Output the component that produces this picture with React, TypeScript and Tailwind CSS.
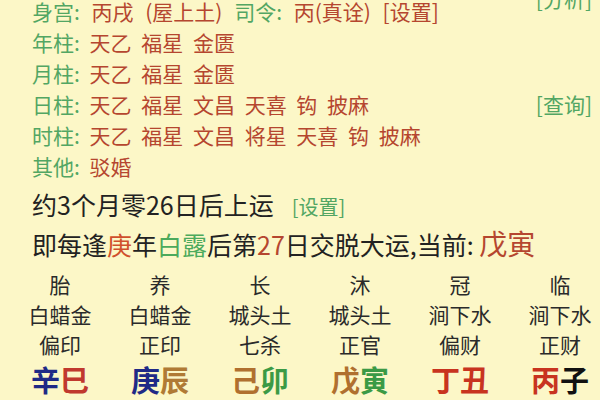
import React from "react";

const LABEL = "text-[#52a663]";
const VALUE = "text-[#b5462f]";

interface PillarRow {
  label: string;
  value: string;
  action?: string;
}

const rows: PillarRow[] = [
  { label: "年柱", value: "天乙 福星 金匮" },
  { label: "月柱", value: "天乙 福星 金匮" },
  { label: "日柱", value: "天乙 福星 文昌 天喜 钩 披麻", action: "[查询]" },
  { label: "时柱", value: "天乙 福星 文昌 将星 天喜 钩 披麻" },
  { label: "其他", value: "驳婚" },
];

interface Column {
  stage: string;
  nayin: string;
  god: string;
  stem: string;
  stemColor: string;
  branch: string;
  branchColor: string;
}

const columns: Column[] = [
  { stage: "胎", nayin: "白蜡金", god: "偏印", stem: "辛", stemColor: "text-[#1f2a86]", branch: "巳", branchColor: "text-[#c0392e]" },
  { stage: "养", nayin: "白蜡金", god: "正印", stem: "庚", stemColor: "text-[#1f2a86]", branch: "辰", branchColor: "text-[#b07a35]" },
  { stage: "长", nayin: "城头土", god: "七杀", stem: "己", stemColor: "text-[#b0702f]", branch: "卯", branchColor: "text-[#3b9a45]" },
  { stage: "沐", nayin: "城头土", god: "正官", stem: "戊", stemColor: "text-[#b0702f]", branch: "寅", branchColor: "text-[#3b9a45]" },
  { stage: "冠", nayin: "涧下水", god: "偏财", stem: "丁", stemColor: "text-[#c8341f]", branch: "丑", branchColor: "text-[#c8341f]" },
  { stage: "临", nayin: "涧下水", god: "正财", stem: "丙", stemColor: "text-[#c8341f]", branch: "子", branchColor: "text-[#111111]" },
];

export default function App() {
  return (
    <div
      className="w-[600px] h-[400px] overflow-hidden bg-[#fcf7c7] text-[#222222]"
      style={{ fontFamily: '"Noto Sans CJK SC", "Noto Sans", sans-serif' }}
    >
      <div className="mt-[-4px] pl-[32px] pr-[8px] text-[21px] leading-[31px] [word-spacing:5px]">
        <div className="flex justify-between whitespace-nowrap">
          <div className="[word-spacing:7px]">
            <span className={LABEL}>身宫: </span>
            <span className={VALUE}>丙戌 (屋上土) </span>
            <span className={LABEL}>司令: </span>
            <span className={VALUE}>丙(真诠) [设置]</span>
          </div>
          <span className={`${LABEL} -mt-[13px]`}>[分析]</span>
        </div>
        {rows.map((r) => (
          <div key={r.label} className="flex justify-between whitespace-nowrap">
            <div>
              <span className={LABEL}>{r.label}: </span>
              <span className={VALUE}>{r.value}</span>
            </div>
            {r.action && <span className={LABEL}>{r.action}</span>}
          </div>
        ))}
        <div className="mt-[4px] text-[25px] leading-[37px] whitespace-nowrap [word-spacing:0px]">
          约3个月零26日后上运
          <span className={`${LABEL} ml-[18px] text-[20px]`}>[设置]</span>
        </div>
        <div className="text-[25px] leading-[37px] whitespace-nowrap [word-spacing:0px]">
          即每逢<span className="text-[#d0502c]">庚</span>年
          <span className="text-[#4caa5c]">白露</span>后第
          <span className={VALUE}>27</span>日交脱大运,当前:{" "}
          <span className={`${VALUE} text-[28px]`}>戊寅</span>
        </div>
      </div>

      <div className="mt-[6px] ml-[10px] grid w-[600px] grid-cols-6 text-center text-[21px] leading-[30px] text-[#2a2a2a]">
        {columns.map((c) => (
          <div key={c.stage} className="flex flex-col items-center whitespace-nowrap">
            <div>{c.stage}</div>
            <div>{c.nayin}</div>
            <div>{c.god}</div>
            <div className="text-[29px] font-bold leading-[40px]">
              <span className={c.stemColor}>{c.stem}</span>
              <span className={c.branchColor}>{c.branch}</span>
            </div>
          </div>
        ))}
      </div>
    </div>
  );
}
